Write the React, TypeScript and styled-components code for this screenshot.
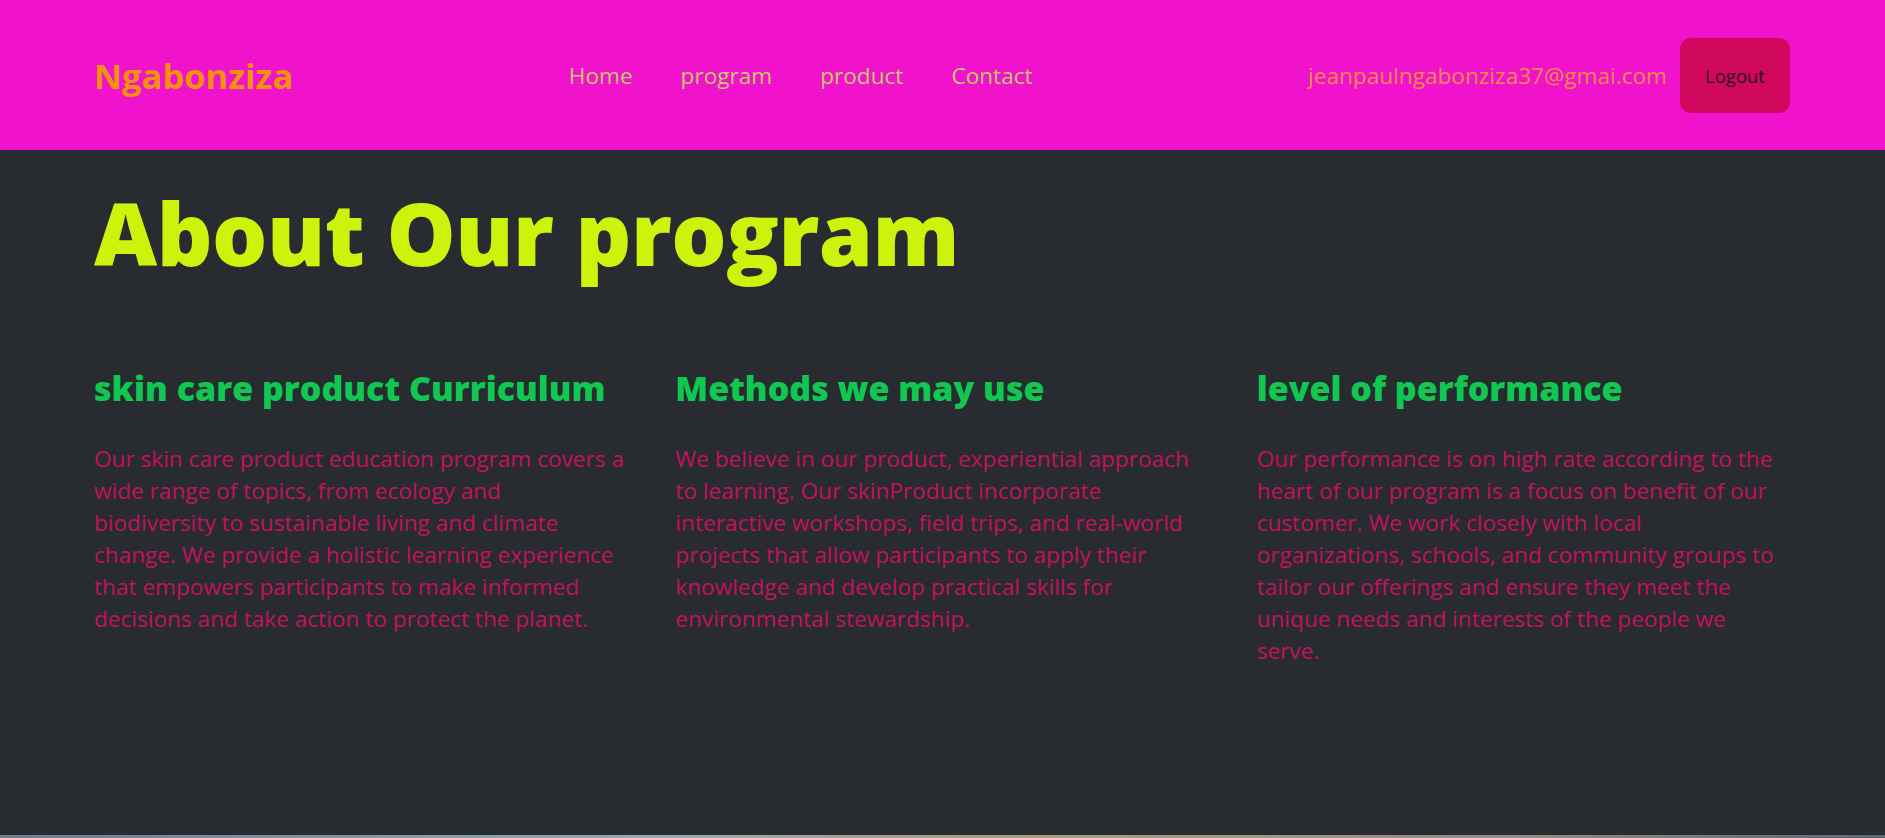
import React from "react";
import styled, { createGlobalStyle } from "styled-components";

const GlobalStyle = createGlobalStyle`
  html, body {
    margin: 0;
    padding: 0;
    background: #282b30;
  }
  body {
    font-family: "Open Sans", "Noto Sans", sans-serif;
  }
  * { box-sizing: border-box; }
`;

const Page = styled.div`
  min-height: 838px;
  display: flex;
  flex-direction: column;
  background: #282b30;
`;

const NavBar = styled.header`
  height: 150px;
  background: #f113cb;
  display: flex;
  align-items: center;
  justify-content: space-between;
  padding: 0 95px 0 94px;
`;

const Logo = styled.div`
  font-size: 34.5px;
  font-weight: 700;
  color: #f0920f;
`;

const NavLinks = styled.nav`
  display: flex;
  align-items: center;
  gap: 48px;
`;

const NavLink = styled.a`
  font-size: 22.6px;
  color: #c6c86c;
  text-decoration: none;
  cursor: pointer;
`;

const UserArea = styled.div`
  display: flex;
  align-items: center;
  gap: 13px;
`;

const Email = styled.span`
  font-size: 22.6px;
  color: #f58a4c;
`;

const LogoutButton = styled.button`
  width: 110px;
  height: 75px;
  border: none;
  border-radius: 11px;
  background: #d0085e;
  color: #2a0a1c;
  font-family: inherit;
  font-size: 18.5px;
  cursor: pointer;
`;

const Main = styled.main`
  flex: 1;
  padding: 0 95px 0 94px;
`;

const Title = styled.h1`
  margin: 35px 0 0;
  font-size: 87px;
  font-weight: 900;
  color: #cdf20b;
  line-height: 1.1;
  letter-spacing: -0.5px;
`;

const Columns = styled.div`
  display: grid;
  grid-template-columns: repeat(3, 1fr);
  column-gap: 48px;
  margin-top: 87px;
`;

const Column = styled.section`
  display: flex;
  flex-direction: column;
`;

const ColumnTitle = styled.h3`
  margin: 0;
  font-size: 34px;
  font-weight: 800;
  color: #10c851;
  line-height: 1.2;
`;

const ColumnText = styled.p`
  margin: 35px 0 0;
  font-size: 22.6px;
  line-height: 32px;
  color: #c2125e;
`;

const BottomStrip = styled.div`
  height: 3px;
  background: linear-gradient(90deg, #6d7f8a 0%, #9aa6ad 35%, #a89c7a 55%, #8f8f88 80%, #5e6670 100%);
`;

const columns = [
  {
    title: "skin care product Curriculum",
    text: "Our skin care product education program covers a wide range of topics, from ecology and biodiversity to sustainable living and climate change. We provide a holistic learning experience that empowers participants to make informed decisions and take action to protect the planet.",
  },
  {
    title: "Methods we may use",
    text: "We believe in our product, experiential approach to learning. Our skinProduct incorporate interactive workshops, field trips, and real-world projects that allow participants to apply their knowledge and develop practical skills for environmental stewardship.",
  },
  {
    title: "level of performance",
    text: "Our performance is on high rate according to the heart of our program is a focus on benefit of our customer. We work closely with local organizations, schools, and community groups to tailor our offerings and ensure they meet the unique needs and interests of the people we serve.",
  },
];

export default function App() {
  return (
    <>
      <GlobalStyle />
      <Page>
        <NavBar>
          <Logo>Ngabonziza</Logo>
          <NavLinks>
            <NavLink>Home</NavLink>
            <NavLink>program</NavLink>
            <NavLink>product</NavLink>
            <NavLink>Contact</NavLink>
          </NavLinks>
          <UserArea>
            <Email>jeanpaulngabonziza37@gmai.com</Email>
            <LogoutButton>Logout</LogoutButton>
          </UserArea>
        </NavBar>
        <Main>
          <Title>About Our program</Title>
          <Columns>
            {columns.map((c) => (
              <Column key={c.title}>
                <ColumnTitle>{c.title}</ColumnTitle>
                <ColumnText>{c.text}</ColumnText>
              </Column>
            ))}
          </Columns>
        </Main>
        <BottomStrip />
      </Page>
    </>
  );
}
